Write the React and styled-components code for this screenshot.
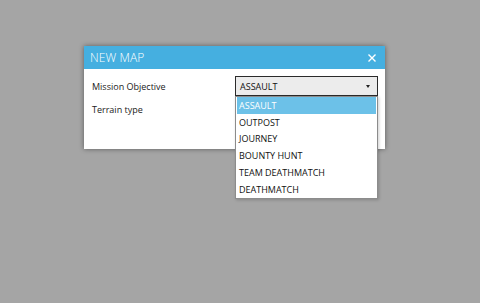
import React from 'react'
import styled, { createGlobalStyle } from 'styled-components'

const GlobalStyle = createGlobalStyle`
  html, body {
    margin: 0;
    padding: 0;
    background: #a5a5a5;
    font-family: 'Open Sans', 'Noto Sans', sans-serif;
  }
`

const Page = styled.div`
  height: 303px;
  padding: 46px 0 0 84px;
  box-sizing: border-box;
`

const Dialog = styled.div`
  position: relative;
  width: 301px;
  height: 103px;
  background: #fff;
  box-shadow: 0 0 5px rgba(0, 0, 0, 0.45);
  display: flex;
  flex-direction: column;
`

const TitleBar = styled.div`
  height: 23px;
  background: #45afe0;
  display: flex;
  align-items: center;
  justify-content: space-between;
  padding: 0 9px 0 6px;
  color: #fff;
`

const Title = styled.span`
  font-size: 12px;
  font-weight: 300;
  letter-spacing: 0.1px;
`

const Close = styled.svg`
  width: 8px;
  height: 8px;
  stroke: #fff;
  stroke-width: 1.4;
  margin-top: 1px;
`

const Body = styled.div`
  display: grid;
  grid-template-columns: 1fr 143px;
  row-gap: 3px;
  padding: 7px 7px 0 8px;
`

const Label = styled.div`
  height: 20px;
  display: flex;
  align-items: center;
  font-size: 9px;
  color: #222;
`

const Combo = styled.div`
  position: relative;
  height: 20px;
  box-sizing: border-box;
  border: 1px solid #2b2b2b;
  background: #ececec;
  display: flex;
  align-items: center;
  justify-content: space-between;
  padding: 0 7px 0 4px;
  font-size: 9px;
  color: #111;
`

const Arrow = styled.span`
  width: 0;
  height: 0;
  border-left: 2.5px solid transparent;
  border-right: 2.5px solid transparent;
  border-top: 3px solid #222;
`

const Menu = styled.ul`
  position: absolute;
  top: 19px;
  left: -1px;
  width: 143px;
  box-sizing: border-box;
  margin: 0;
  padding: 0 1px;
  list-style: none;
  background: #fff;
  border: 1px solid #8c8c8c;
  box-shadow: 1px 1px 3px rgba(0, 0, 0, 0.2);
  z-index: 2;
`

const Item = styled.li`
  height: 16.8px;
  display: flex;
  align-items: center;
  padding-left: 2px;
  font-size: 9px;
  color: ${(p) => (p.active ? '#fff' : '#111')};
  background: ${(p) => (p.active ? '#6cc1e8' : 'transparent')};
`

const options = ['ASSAULT', 'OUTPOST', 'JOURNEY', 'BOUNTY HUNT', 'TEAM DEATHMATCH', 'DEATHMATCH']

export default function App() {
  return (
    <Page>
      <GlobalStyle />
      <Dialog>
        <TitleBar>
          <Title>NEW MAP</Title>
          <Close viewBox="0 0 8 8">
            <path d="M0.5 0.5 L7.5 7.5 M7.5 0.5 L0.5 7.5" />
          </Close>
        </TitleBar>
        <Body>
          <Label>Mission Objective</Label>
          <Combo>
            <span>ASSAULT</span>
            <Arrow />
            <Menu>
              {options.map((o, i) => (
                <Item key={o} active={i === 0}>
                  {o}
                </Item>
              ))}
            </Menu>
          </Combo>
          <Label>Terrain type</Label>
          <div />
        </Body>
      </Dialog>
    </Page>
  )
}
